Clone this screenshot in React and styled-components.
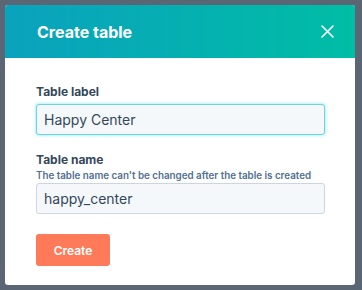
import * as React from 'react'
import styled, {createGlobalStyle} from 'styled-components'

const GlobalStyle = createGlobalStyle`
    html, body {
        margin: 0;
        padding: 0;
        background: #5b6674;
        font-family: Inter, "Noto Sans", sans-serif;
    }
`

const Page = styled.div`
    width: 362px;
    height: 290px;
    padding: 5px 7px 5px 5px;
    box-sizing: border-box;
`

const Modal = styled.div`
    display: flex;
    flex-direction: column;
    width: 350px;
    height: 280px;
    background: #fff;
    border-radius: 3px;
    overflow: hidden;
`

const Header = styled.header`
    display: flex;
    align-items: center;
    justify-content: space-between;
    height: 53px;
    padding: 0 21px 0 32px;
    background: linear-gradient(90deg, #0aa2bd 0%, #00bda5 100%);
    color: #fff;
`

const Title = styled.h1`
    margin: 0;
    font-size: 16px;
    font-weight: 700;
`

const Close = styled.button`
    display: flex;
    padding: 0;
    border: 0;
    background: none;
    color: #fff;
    cursor: pointer;
`

const Body = styled.div`
    display: flex;
    flex-direction: column;
    padding: 26px 30px 0 31px;
`

const Field = styled.div`
    display: flex;
    flex-direction: column;
    margin-bottom: ${(p) => p.last ? '20px' : '17px'};
`

const Label = styled.label`
    font-size: 12px;
    font-weight: 700;
    color: #33475b;
    line-height: 16px;
    margin-bottom: 4px;
`

const Help = styled.div`
    font-size: 9.8px;
    font-weight: 600;
    color: #516f90;
    line-height: 14px;
    margin: -3px 0 0;
`

const Input = styled.input`
    height: 31px;
    box-sizing: border-box;
    padding: 0 7px;
    font-family: inherit;
    font-size: 14px;
    color: #33475b;
    background: #f5f8fa;
    border: 1px solid ${(p) => p.focused ? '#6fd3dd' : '#cbd6e2'};
    border-radius: 3px;
    box-shadow: ${(p) => p.focused ? '0 0 3px 1px rgba(0, 208, 228, 0.3)' : 'none'};
    outline: none;
`

const Button = styled.button`
    align-self: flex-start;
    width: 74px;
    height: 32px;
    border: 0;
    border-radius: 3px;
    background: #ff7a59;
    color: #fff;
    font-family: inherit;
    font-size: 12px;
    font-weight: 600;
    cursor: pointer;
`

const App = () => (
    <>
        <GlobalStyle />
        <Page>
            <Modal>
                <Header>
                    <Title>Create table</Title>
                    <Close aria-label="Close">
                        <svg width="13" height="13" viewBox="0 0 13 13">
                            <path d="M1 1L12 12M12 1L1 12" stroke="#fff" strokeWidth="1.6" strokeLinecap="round" />
                        </svg>
                    </Close>
                </Header>
                <Body>
                    <Field>
                        <Label>Table label</Label>
                        <Input focused defaultValue="Happy Center" />
                    </Field>
                    <Field last>
                        <Label>Table name</Label>
                        <Help>The table name can't be changed after the table is created</Help>
                        <Input defaultValue="happy_center" />
                    </Field>
                    <Button>Create</Button>
                </Body>
            </Modal>
        </Page>
    </>
)

export default App
